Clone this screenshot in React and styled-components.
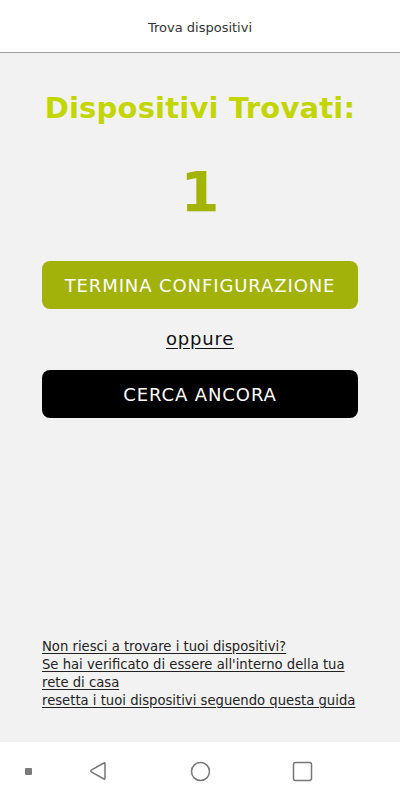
import React from "react";
import styled, { createGlobalStyle } from "styled-components";

const Global = createGlobalStyle`
  html, body { margin: 0; padding: 0; }
  body { background: #f2f2f2; font-family: "DejaVu Sans", "Noto Sans", sans-serif; }
`;

const Screen = styled.div`
  width: 400px;
  height: 800px;
  display: flex;
  flex-direction: column;
  background: #f2f2f2;
`;

const Header = styled.header`
  height: 53px;
  flex: 0 0 53px;
  background: #ffffff;
  border-bottom: 1px solid #9e9e9e;
  display: flex;
  align-items: center;
  justify-content: center;
  padding-top: 2px;
  box-sizing: border-box;
`;

const HeaderTitle = styled.h1`
  margin: 0;
  font-size: 13px;
  font-weight: 400;
  color: #333333;
`;

const Main = styled.main`
  flex: 1;
  display: flex;
  flex-direction: column;
  padding: 0 42px 32px;
`;

const Title = styled.h2`
  margin: 37px 0 0;
  text-align: center;
  font-size: 29px;
  line-height: 36px;
  font-weight: 700;
  color: #c3d600;
  letter-spacing: 0.2px;
`;

const Count = styled.div`
  margin-top: 34px;
  text-align: center;
  font-size: 56px;
  line-height: 64px;
  font-weight: 700;
  color: #a3b407;
`;

const Button = styled.button`
  display: flex;
  align-items: center;
  justify-content: center;
  width: 100%;
  height: 48px;
  border: none;
  border-radius: 8px;
  background: ${(p) => (p.$variant === "dark" ? "#000000" : "#a2b20a")};
  color: #ffffff;
  font-family: inherit;
  font-size: 18px;
  font-weight: 400;
  letter-spacing: 0.9px;
  cursor: pointer;
`;

const PrimaryButton = styled(Button)`
  margin-top: 37px;
`;

const Or = styled.a`
  align-self: center;
  margin: 18px 0 19px;
  font-size: 18px;
  line-height: 24px;
  letter-spacing: 0.8px;
  color: #111111;
  text-decoration: underline;
  text-underline-offset: 3px;
`;

const Spacer = styled.div`
  flex: 1;
`;

const HelpLinks = styled.div`
  display: flex;
  flex-direction: column;
`;

const HelpLink = styled.a`
  font-size: 13.2px;
  line-height: 18px;
  color: #222222;
  text-decoration: underline;
  text-underline-offset: 2px;
  white-space: nowrap;
`;

const NavBar = styled.nav`
  height: 58px;
  flex: 0 0 58px;
  background: #ffffff;
  display: grid;
  grid-template-columns: 56px 84px 120px 84px 56px;
  align-items: center;
  justify-items: center;
`;

const Dot = styled.span`
  width: 7px;
  height: 7px;
  border-radius: 1px;
  background: #7a7a7a;
`;

const Icon = styled.svg`
  display: block;
`;

export default function App() {
  return (
    <Screen>
      <Global />
      <Header>
        <HeaderTitle>Trova dispositivi</HeaderTitle>
      </Header>
      <Main>
        <Title>Dispositivi Trovati:</Title>
        <Count>1</Count>
        <PrimaryButton>TERMINA CONFIGURAZIONE</PrimaryButton>
        <Or href="#">oppure</Or>
        <Button $variant="dark">CERCA ANCORA</Button>
        <Spacer />
        <HelpLinks>
          <HelpLink href="#">Non riesci a trovare i tuoi dispositivi?</HelpLink>
          <HelpLink href="#">Se hai verificato di essere all'interno della tua</HelpLink>
          <HelpLink href="#">rete di casa</HelpLink>
          <HelpLink href="#">resetta i tuoi dispositivi seguendo questa guida</HelpLink>
        </HelpLinks>
      </Main>
      <NavBar>
        <Dot />
        <Icon width="20" height="20" viewBox="0 0 20 20">
          <path d="M17 2.5 L17 17.5 Q17 18.6 16 18 L3.2 10.8 Q2.3 10 3.2 9.2 L16 2 Q17 1.4 17 2.5 Z" fill="none" stroke="#777" strokeWidth="1.5" strokeLinejoin="round" />
        </Icon>
        <Icon width="21" height="21" viewBox="0 0 21 21">
          <circle cx="10.5" cy="10.5" r="9" fill="none" stroke="#777" strokeWidth="1.5" />
        </Icon>
        <Icon width="21" height="21" viewBox="0 0 21 21">
          <rect x="1.5" y="1.5" width="18" height="18" rx="2" fill="none" stroke="#777" strokeWidth="1.5" />
        </Icon>
        <span />
      </NavBar>
    </Screen>
  );
}
